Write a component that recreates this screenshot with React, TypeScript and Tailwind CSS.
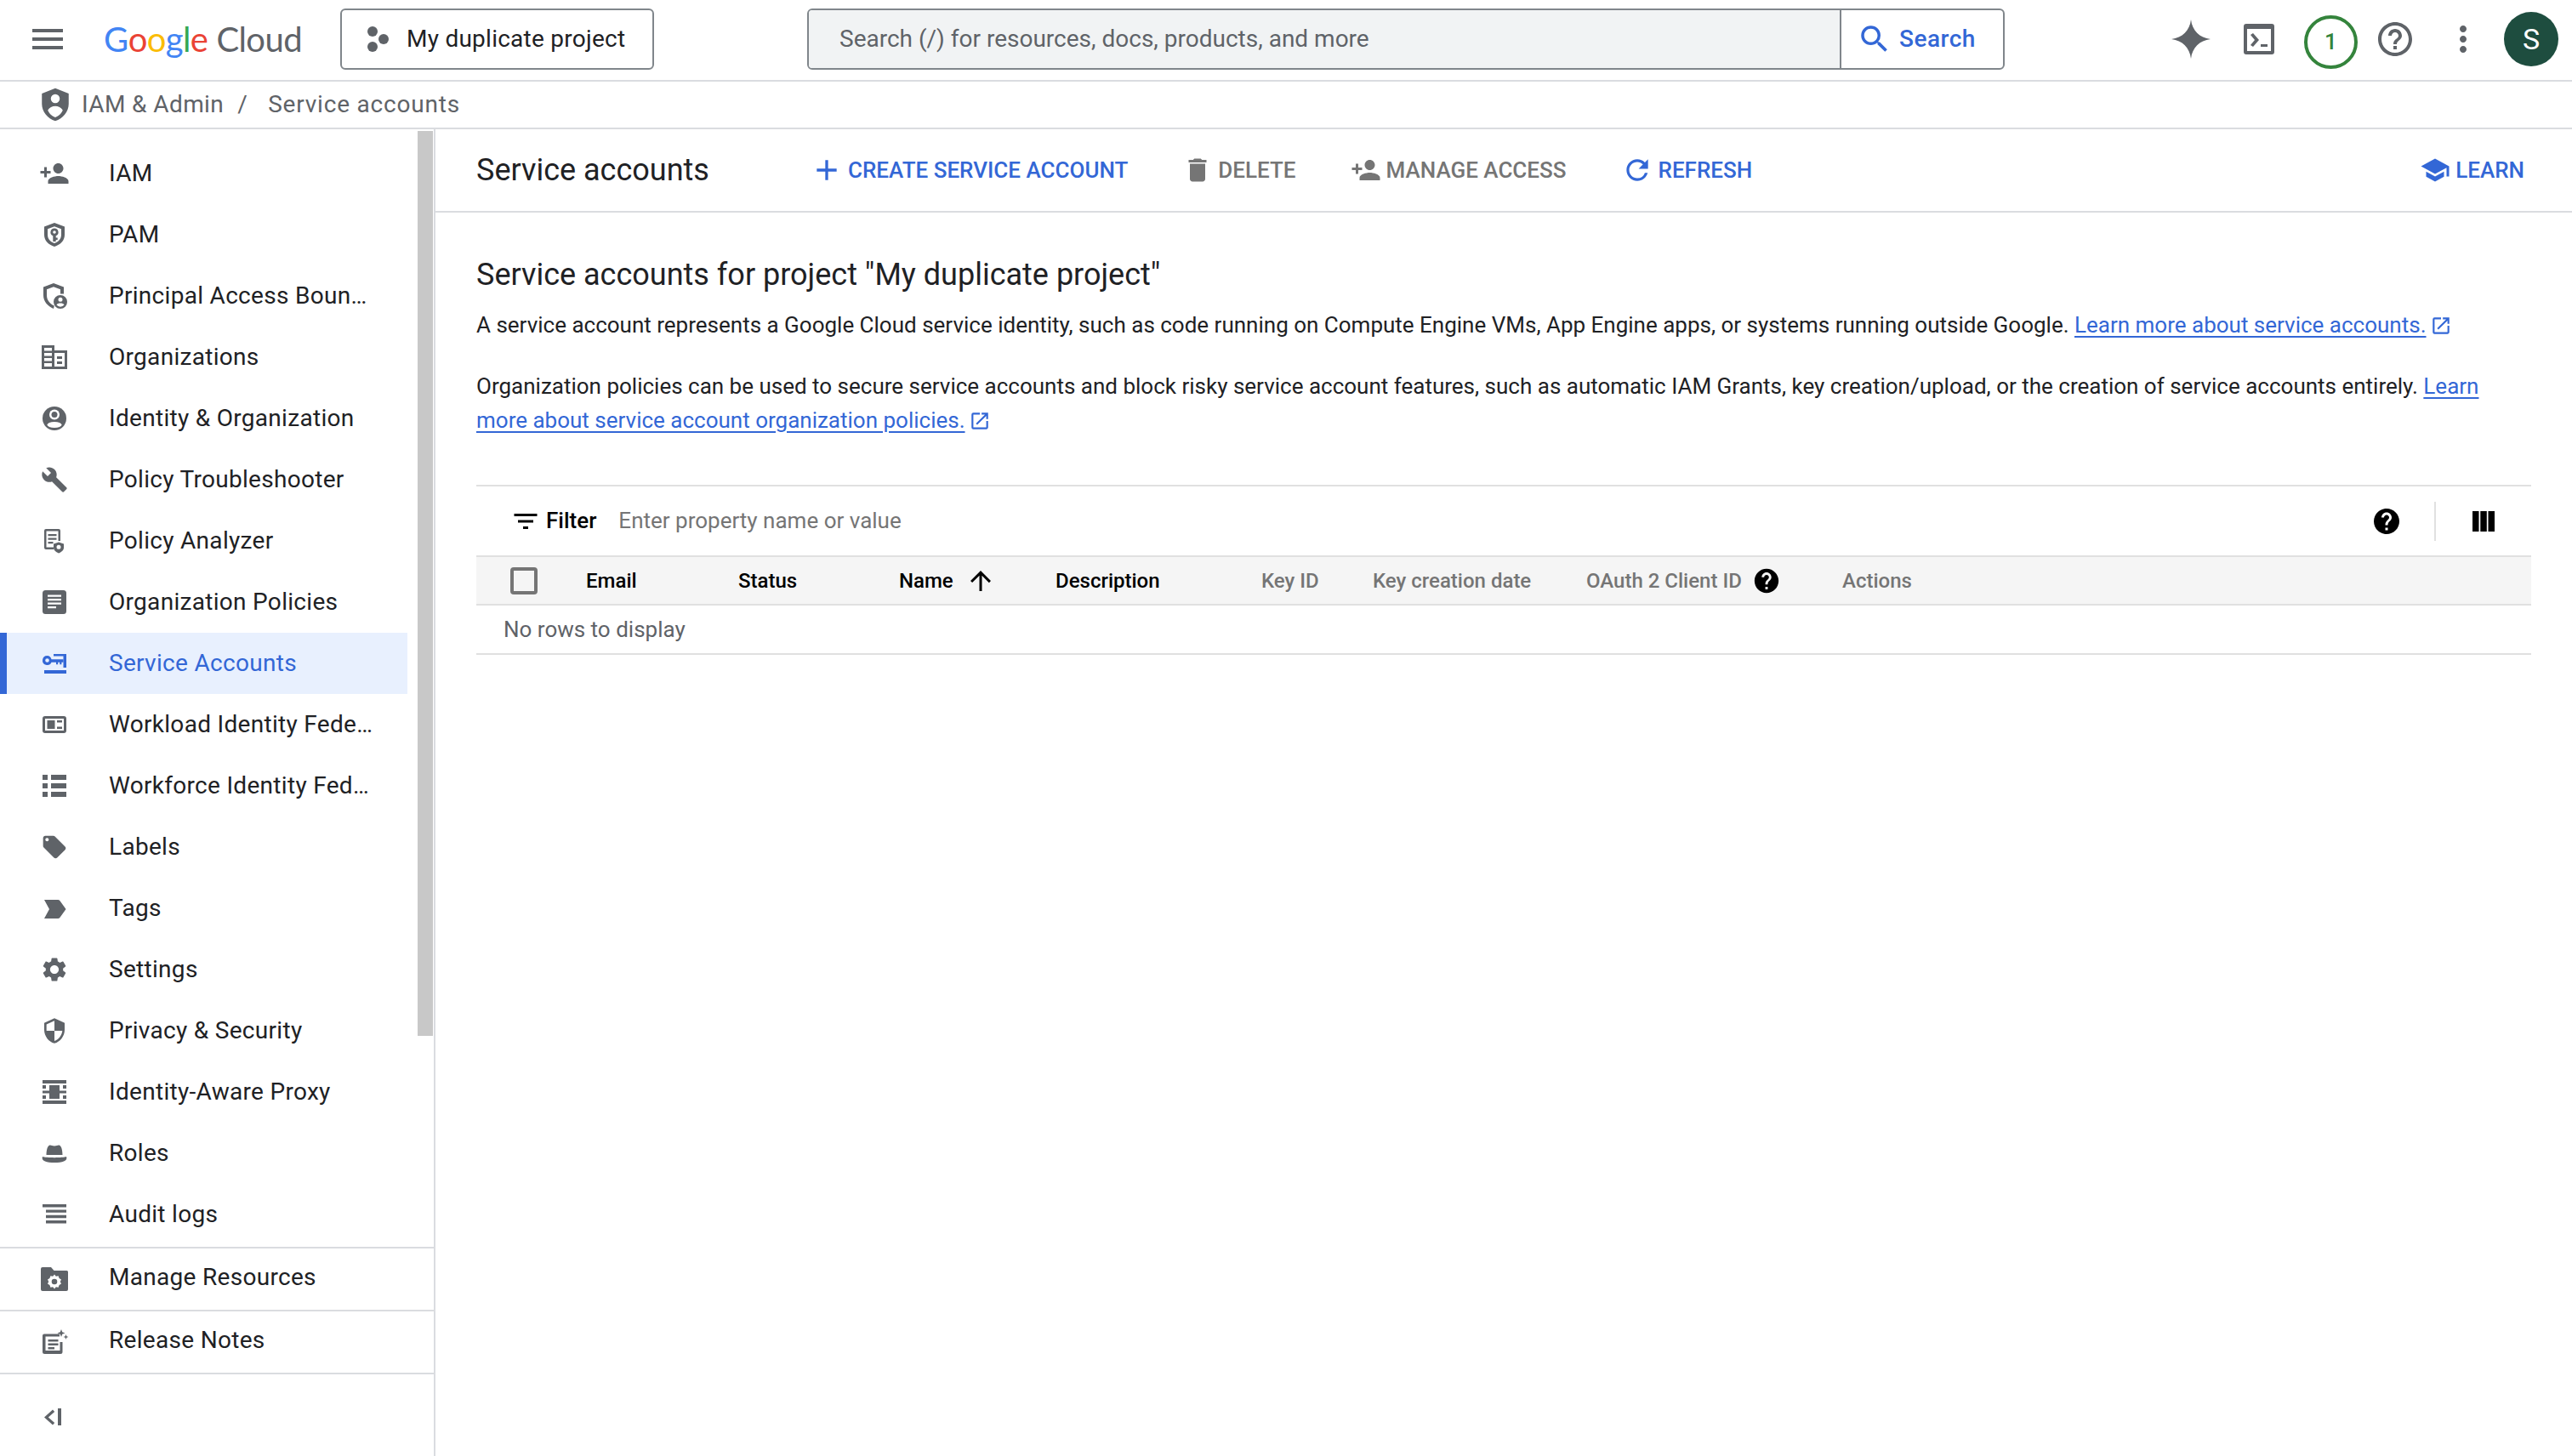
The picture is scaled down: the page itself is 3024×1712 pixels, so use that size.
import type { FC, ReactNode } from "react";
import { MdAdd, MdArrowUpward, MdBuild, MdDelete, MdFilterList, MdHelp, MdHelpOutline, MdLocalOffer, MdMenu, MdMoreVert, MdOpenInNew, MdPersonAdd, MdRefresh, MdSchool, MdSearch, MdSecurity, MdSettings } from "react-icons/md";

const boxClass = "h-[36px] w-[36px]";

const PamIcon: FC = () => (
    <svg className={boxClass} fill="#5f6368" viewBox="0 0 36 36">
        <path clipRule="evenodd" d="M18 4 6 8.500v9.500c0 7 5 11.800 12 14 7-2.200 12-7 12-14V8.500L18 4Zm0 4.200 8 3v6.800c0 5-3.400 8.500-8 10-4.600-1.500-8-5-8-10v-6.800l8-3Z" fillRule="evenodd" />
        <path clipRule="evenodd" d="M18 10.500a4.500 4.500 0 0 0-1.700 8.700V26h3.400v-2h2v-2.500h-2v-2.300A4.500 4.500 0 0 0 18 10.500Zm0 2.700a1.800 1.800 0 1 1 0 3.600 1.800 1.800 0 0 1 0-3.600Z" fillRule="evenodd" />
    </svg>
);

const PrincipalIcon: FC = () => (
    <svg className={boxClass} fill="#5f6368" viewBox="0 0 36 36">
        <path d="M17 3 5 7.500v9.500c0 7.500 5 13 12 16l.8-3.600C12 27 9 22.500 9 17v-6.800l8-3 8 3v5.300h4V7.500L17 3Z" />
        <path clipRule="evenodd" d="M25 17a8 8 0 1 0 0 16 8 8 0 0 0 0-16Zm0 2.800a2.500 2.500 0 1 1 0 5 2.500 2.500 0 0 1 0-5Zm-4.500 8.700c.7-1.400 2.500-2 4.500-2s3.800.6 4.500 2a5.800 5.800 0 0 1-9 0Z" fillRule="evenodd" />
    </svg>
);

const OrgsIcon: FC = () => (
    <svg className={boxClass} fill="#5f6368" viewBox="0 0 36 36">
        <path clipRule="evenodd" d="M3 4h15v6h15v22H3V4Zm3 3v3.500h9V7H6Zm0 6v3.500h9V13H6Zm0 6v3.500h9V19H6Zm0 6v4h9v-4H6Zm12-12v16h12V13H18Z" fillRule="evenodd" />
        <path d="M21 17h6v3h-6zM21 23h6v3h-6z" />
    </svg>
);

const IdentityIcon: FC = () => (
    <svg className={boxClass} viewBox="0 0 36 36">
        <circle cx="18" cy="18" fill="#5f6368" r="14" />
        <circle cx="18" cy="13.500" fill="#fff" r="6" />
        <circle cx="18" cy="13.500" fill="#5f6368" r="3.500" />
        <ellipse cx="18" cy="25.500" fill="#fff" rx="8.500" ry="3.500" />
    </svg>
);

const AnalyzerIcon: FC = () => (
    <svg className={boxClass} viewBox="0 0 36 36">
        <path clipRule="evenodd" d="M8 4h15a2 2 0 0 1 2 2v12h-2.500V6.500h-14v19h8.500V28H8a2 2 0 0 1-2-2V6a2 2 0 0 1 2-2Z" fill="#5f6368" fillRule="evenodd" />
        <path d="M10.500 10h10v2.200h-10zM10.500 14.500h10v2.200h-10zM10.500 19h6v2.200h-6z" fill="#5f6368" />
        <path clipRule="evenodd" d="M23 19.500 17 21.500v4.500c0 3 2.500 5 6 6.500 3.500-1.500 6-3.500 6-6.500v-4.500l-6-2Zm0 3.300a2.500 2.500 0 1 1 0 5 2.500 2.500 0 0 1 0-5Z" fill="#5f6368" fillRule="evenodd" />
    </svg>
);

const ArticleIcon: FC = () => (
    <svg className={boxClass} viewBox="0 0 36 36">
        <rect fill="#5f6368" height="28" rx="3.500" width="28" x="4" y="4" />
        <path d="M10 9.500h16v2.200H10zM10 14h16v2.200H10zM10 18.500h16v2.200H10zM10 23h10v2.200H10z" fill="#fff" />
    </svg>
);

const KeyIcon: FC = () => (
    <svg className={boxClass} fill="#3367d6" viewBox="0 0 36 36">
        <path clipRule="evenodd" d="M9.500 9a5.500 5.500 0 1 0 5 7.800h5.500v2.400h2.200v-2.400h2v2.400h2.200v-2.400h2.100v-3.600H14.500A5.500 5.500 0 0 0 9.500 9Zm0 3.200a2.300 2.300 0 1 1 0 4.600 2.300 2.300 0 0 1 0-4.600Z" fillRule="evenodd" />
        <path d="M17 7h15v16h-3.500V9.500H17zM6 26h26v4H6z" />
    </svg>
);

const WorkloadIcon: FC = () => (
    <svg className={boxClass} viewBox="0 0 36 36">
        <rect fill="#5f6368" height="20" rx="3" width="28" x="4" y="8" />
        <rect fill="#fff" height="14" width="22" x="7" y="11" />
        <path d="M9.500 13h9v10h-9zM21 13h6v2.500h-6zM21 20.500h6V23h-6z" fill="#5f6368" />
    </svg>
);

const ListIcon: FC = () => (
    <svg className={boxClass} fill="#5f6368" viewBox="0 0 36 36">
        <path d="M4 5h6v6H4zM14 5h18v6H14zM4 15h6v6H4zM14 15h18v6H14zM4 25h6v6H4zM14 25h18v6H14z" />
    </svg>
);

const TagIcon: FC = () => (
    <svg className={boxClass} fill="#5f6368" viewBox="0 0 36 36">
        <path d="M6 30 12 19 6 8h16a3 3 0 0 1 2.500 1.300L31.500 19l-7 9.700A3 3 0 0 1 22 30H6Z" />
    </svg>
);

const ProxyIcon: FC = () => (
    <svg className={boxClass} fill="#5f6368" viewBox="0 0 36 36">
        <path d="M4 4h28v4H4zM4 28h28v4H4zM12 10h12v16H12zM4 10h4v4H4zM28 10h4v4h-4zM4 22h4v4H4zM28 22h4v4h-4zM4 16.500h28v3H4z" />
    </svg>
);

const HatIcon: FC = () => (
    <svg className={boxClass} fill="#5f6368" viewBox="0 0 36 36">
        <path d="M8.500 20c0-5 1.200-10.500 3.500-11.300 2-.6 3 .8 6 .8s4-1.400 6-.8c2.300.8 3.500 6.300 3.500 11.300h-19Z" />
        <path d="M4 22c4 1.500 24 1.500 28 0 1 2 0 4.500-3 5.500-5 2-17 2-22 0-3-1-4-3.500-3-5.500Z" />
    </svg>
);

const AuditIcon: FC = () => (
    <svg className={boxClass} fill="#5f6368" viewBox="0 0 36 36">
        <path d="M4 6h28v3.400H4zM8 12.400h24v3.400H8zM8 18.800h24v3.400H8zM8 25h24v3.400H8z" />
    </svg>
);

const FolderGearIcon: FC = () => (
    <svg className={boxClass} fill="#5f6368" viewBox="0 0 36 36">
        <path clipRule="evenodd" d="M4 4h10l3.500 4h15A1.500 1.500 0 0 1 34 9.500V30a2 2 0 0 1-2 2H4a2 2 0 0 1-2-2V6a2 2 0 0 1 2-2Zm14 8.500-1.800 2.200-2.800-.4-1 2.600-2.400 1.500 1.200 2.600-1.200 2.600 2.400 1.500 1 2.600 2.800-.4 1.800 2.200 1.800-2.200 2.800.4 1-2.600 2.400-1.500-1.200-2.600 1.200-2.600-2.400-1.500-1-2.600-2.800.4-1.800-2.200Zm0 5.200a3.300 3.300 0 1 1 0 6.600 3.300 3.300 0 0 1 0-6.600Z" fillRule="evenodd" />
    </svg>
);

const ReleaseIcon: FC = () => (
    <svg className={boxClass} fill="#5f6368" viewBox="0 0 36 36">
        <path d="M6 8.500h18v3H7.500V28h17V18h3v11.500A2.500 2.500 0 0 1 25 32H6.500A2.500 2.500 0 0 1 4 29.500V10.500a2 2 0 0 1 2-2Z" />
        <path d="M10.500 15h12v2.500h-12zM10.500 19.500h12V22h-12zM10.500 24h7.500v2.500h-7.500z" />
        <path d="m26 3 1.200 3.300 3.300 1.200-3.300 1.200L26 12l-1.200-3.300-3.300-1.200 3.300-1.200zM31.500 9l.8 2.200 2.200.8-2.200.8-.8 2.200-.8-2.200-2.200-.8 2.200-.8z" />
    </svg>
);

const CollapseIcon: FC = () => (
    <svg className="h-[28px] w-[28px]" fill="#5f6368" viewBox="0 0 28 28">
        <path d="M16 5.500 6 14.500l10 9 2.200-2.400-7.400-6.600 7.400-6.600zM22 4h4v20h-4z" />
    </svg>
);

const AdminShieldIcon: FC = () => (
    <svg className="h-[42px] w-[42px]" fill="#5f6368" viewBox="0 0 24 24">
        <path clipRule="evenodd" d="M12 1 3 4.500v7c0 5.200 3.800 9.800 9 11.500 5.200-1.700 9-6.300 9-11.500v-7L12 1Zm0 4a3 3 0 1 1 0 6 3 3 0 0 1 0-6Zm0 15.500c-2.400-.9-4.400-2.800-5-4.800 1-1.700 3-2.700 5-2.700s4 1 5 2.700c-.6 2-2.600 3.900-5 4.800Z" fillRule="evenodd" />
    </svg>
);

const ProjectIcon: FC = () => (
    <svg className="h-[36px] w-[30px]" fill="#5f6368" viewBox="0 0 30 36">
        <circle cx="8" cy="9" r="6" />
        <circle cx="8" cy="27" r="6" />
        <circle cx="21" cy="18" r="6" />
    </svg>
);

const SparkIcon: FC = () => (
    <svg className="h-[46px] w-[46px]" fill="#5f6368" viewBox="0 0 46 46">
        <path d="M23 0c1.500 13 10 21.500 23 23-13 1.500-21.500 10-23 23-1.500-13-10-21.500-23-23 13-1.500 21.500-10 23-23Z" />
    </svg>
);

const TerminalIcon: FC = () => (
    <svg className="h-[36px] w-[36px]" fill="#5f6368" viewBox="0 0 36 36">
        <path clipRule="evenodd" d="M3 0h30a3 3 0 0 1 3 3v30a3 3 0 0 1-3 3H3a3 3 0 0 1-3-3V3a3 3 0 0 1 3-3Zm1 6v26h28V6H4Z" fillRule="evenodd" />
        <path d="m8 13 3-2 7 8-7 8-3-2 5-6zM20 24h8v3h-8z" />
    </svg>
);

const ColumnsIcon: FC = () => (
    <svg className="h-[28px] w-[28px]" fill="#000" viewBox="0 0 28 28">
        <path d="M1 2h7.500v24H1zM10.300 2h7.500v24h-7.500zM19.500 2H27v24h-7.500z" />
    </svg>
);

type NavItem = { icon: ReactNode; label: string; active?: boolean };

const smallIconClass = "h-[32px] w-[32px] text-[#5f6368]";

const navItems: NavItem[] = [
    { icon: <MdPersonAdd className="h-[36px] w-[36px] text-[#5f6368]" />, label: "IAM" },
    { icon: <PamIcon />, label: "PAM" },
    { icon: <PrincipalIcon />, label: "Principal Access Boun…" },
    { icon: <OrgsIcon />, label: "Organizations" },
    { icon: <IdentityIcon />, label: "Identity & Organization" },
    { icon: <MdBuild className={smallIconClass} />, label: "Policy Troubleshooter" },
    { icon: <AnalyzerIcon />, label: "Policy Analyzer" },
    { icon: <ArticleIcon />, label: "Organization Policies" },
    { active: true, icon: <KeyIcon />, label: "Service Accounts" },
    { icon: <WorkloadIcon />, label: "Workload Identity Fede…" },
    { icon: <ListIcon />, label: "Workforce Identity Fed…" },
    { icon: <MdLocalOffer className={smallIconClass} />, label: "Labels" },
    { icon: <TagIcon />, label: "Tags" },
    { icon: <MdSettings className="h-[34px] w-[34px] text-[#5f6368]" />, label: "Settings" },
    { icon: <MdSecurity className={smallIconClass} />, label: "Privacy & Security" },
    { icon: <ProxyIcon />, label: "Identity-Aware Proxy" },
    { icon: <HatIcon />, label: "Roles" },
    { icon: <AuditIcon />, label: "Audit logs" },
];

const NavRow: FC<{ item: NavItem }> = ({ item }) => (
    <div className={item.active ? "flex h-[72px] items-center border-l-[8px] border-[#3367d6] bg-[#e8f0fe] text-[#3367d6]" : "flex h-[72px] items-center border-l-[8px] border-transparent text-[#202124]"}>
        <div className="flex w-[120px] shrink-0 pl-[38px]">
            <div className="flex h-[36px] w-[36px] items-center justify-center">{item.icon}</div>
        </div>
        <span className="text-[28px] tracking-[0.3px]">{item.label}</span>
    </div>
);

const FooterRow: FC<{ icon: ReactNode; label: string }> = ({ icon, label }) => (
    <div className="flex h-[74px] items-center border-t-2 border-[#dadce0] text-[#202124]">
        <div className="flex w-[128px] shrink-0 pl-[46px]">{icon}</div>
        <span className="pb-[4px] text-[28px] tracking-[0.3px]">{label}</span>
    </div>
);

const Action: FC<{ icon: ReactNode; label: string; muted?: boolean; className?: string }> = ({ icon, label, muted, className }) => (
    <div className={`flex items-center text-[26px] font-medium ${muted ? "text-[#757575]" : "text-[#3367d6]"} ${className ?? ""}`}>
        {icon}
        <span>{label}</span>
    </div>
);

const HeadCell: FC<{ label: string; width: string; muted?: boolean; children?: ReactNode }> = ({ label, width, muted, children }) => (
    <div className={`flex items-center ${width} ${muted ? "text-[#757575]" : "text-black"}`}>
        <span>{label}</span>
        {children}
    </div>
);

const ExternalLink: FC = () => <MdOpenInNew className="ml-[4px] inline h-[26px] w-[26px] align-[-5px] text-[#3367d6]" />;

const App: FC = () => (
    <div className="flex h-[1712px] w-[3024px] flex-col overflow-hidden bg-white font-['Roboto',sans-serif] text-[#202124]">
        <header className="flex h-[96px] shrink-0 items-center border-b-2 border-[#dadce0] pb-[2px]">
            <MdMenu className="ml-[32px] h-[48px] w-[48px] text-[#5f6368]" />
            <div className="ml-[42px] flex w-[240px] items-baseline font-['Lato',sans-serif] text-[40px] tracking-[-0.6px]">
                <span className="text-[#4285f4]">G</span>
                <span className="text-[#ea4335]">o</span>
                <span className="text-[#fbbc04]">o</span>
                <span className="text-[#4285f4]">g</span>
                <span className="text-[#34a853]">l</span>
                <span className="text-[#ea4335]">e</span>
                <span className="ml-[10px] text-[#5f6368]">Cloud</span>
            </div>
            <div className="ml-[38px] flex h-[72px] w-[369px] items-center rounded-[6px] border-2 border-[#80868b] pl-[28px]">
                <ProjectIcon />
                <span className="ml-[18px] text-[28px] tracking-[0.25px]">My duplicate project</span>
            </div>
            <div className="ml-[180px] flex h-[72px] w-[1408px] rounded-[6px] border-2 border-[#80868b]">
                <div className="flex w-[1214px] items-center rounded-l-[4px] border-r-2 border-[#80868b] bg-[#f1f3f4] pl-[36px] text-[28px] text-[#5f6368]">
                    Search (/) for resources, docs, products, and more
                </div>
                <div className="flex flex-1 items-center pl-[18px] text-[28px] font-medium tracking-[0.5px] text-[#3367d6]">
                    <MdSearch className="h-[42px] w-[42px]" />
                    <span className="ml-[8px]">Search</span>
                </div>
            </div>
            <div className="ml-[196px]">
                <SparkIcon />
            </div>
            <div className="ml-[39px]">
                <TerminalIcon />
            </div>
            <div className="ml-[35px] mt-[7px] flex h-[63px] w-[63px] items-center justify-center rounded-full border-[4px] border-[#34843c] text-[26px] font-medium text-[#34843c]">1</div>
            <MdHelpOutline className="ml-[20px] h-[48px] w-[48px] text-[#5f6368]" />
            <MdMoreVert className="ml-[32px] h-[48px] w-[48px] text-[#5f6368]" />
            <div className="ml-[24px] flex h-[64px] w-[64px] items-center justify-center rounded-full bg-[#1e4d3f] text-[34px] text-white">S</div>
        </header>

        <div className="flex h-[56px] shrink-0 items-center border-b-2 border-[#dadce0] pl-[44px] text-[28px] tracking-[0.4px] text-[#5f6368]">
            <AdminShieldIcon />
            <span className="ml-[10px]">IAM &amp; Admin</span>
            <span className="ml-[16px]">/</span>
            <span className="ml-[24px] tracking-[0.8px]">Service accounts</span>
        </div>

        <div className="flex min-h-0 flex-1">
            <aside className="flex w-[512px] shrink-0 flex-col border-r-2 border-[#dadce0]">
                <div className="flex h-[1314px] shrink-0">
                    <nav className="w-[479px] shrink-0 pt-[16px]">
                        {navItems.map((item) => (
                            <NavRow item={item} key={item.label} />
                        ))}
                    </nav>
                    <div className="ml-[12px] mt-[2px] h-[1064px] w-[18px] bg-[#c8c8c8]" />
                </div>
                <FooterRow icon={<FolderGearIcon />} label="Manage Resources" />
                <FooterRow icon={<ReleaseIcon />} label="Release Notes" />
                <div className="flex flex-1 items-start border-t-2 border-[#dadce0] pl-[46px] pt-[36px]">
                    <CollapseIcon />
                </div>
            </aside>

            <main className="min-w-0 flex-1">
                <div className="flex h-[98px] items-center border-b-2 border-[#dadce0] pl-[48px] pr-[56px]">
                    <h1 className="w-[392px] text-[36px]">Service accounts</h1>
                    <Action className="gap-[5px]" icon={<MdAdd className="h-[40px] w-[40px]" />} label="CREATE SERVICE ACCOUNT" />
                    <Action className="ml-[64px] gap-[6px]" icon={<MdDelete className="h-[36px] w-[36px]" />} label="DELETE" muted />
                    <Action className="ml-[64px] gap-[6px]" icon={<MdPersonAdd className="h-[36px] w-[36px]" />} label="MANAGE ACCESS" muted />
                    <Action className="ml-[64px] gap-[6px]" icon={<MdRefresh className="h-[38px] w-[38px]" />} label="REFRESH" />
                    <Action className="ml-auto gap-[6px]" icon={<MdSchool className="h-[36px] w-[36px]" />} label="LEARN" />
                </div>

                <div className="pl-[48px] pr-[48px] pt-[50px]">
                    <h2 className="text-[36px] leading-[46px]">Service accounts for project "My duplicate project"</h2>
                    <p className="mt-[16px] text-[26px] leading-[40px]">
                        A service account represents a Google Cloud service identity, such as code running on Compute Engine VMs, App Engine apps, or systems running outside Google.{" "}
                        <span className="text-[#3367d6] underline underline-offset-4">Learn more about service accounts.</span>
                        <ExternalLink />
                    </p>
                    <p className="mt-[32px] text-[26px] leading-[40px]">
                        Organization policies can be used to secure service accounts and block risky service account features, such as automatic IAM Grants, key creation/upload, or the creation of service accounts entirely.{" "}
                        <span className="text-[#3367d6] underline underline-offset-4">Learn more about service account organization policies.</span>
                        <ExternalLink />
                    </p>

                    <div className="mt-[56px] border-t-2 border-[#e0e0e0] text-[24px]">
                        <div className="flex h-[81px] items-center pl-[40px] pr-[42px] text-[26px]">
                            <MdFilterList className="h-[36px] w-[36px] text-black" />
                            <span className="ml-[6px] font-medium text-black">Filter</span>
                            <span className="ml-[26px] text-[#757575]">Enter property name or value</span>
                            <MdHelp className="ml-auto h-[36px] w-[36px] text-black" />
                            <div className="ml-[38px] h-[46px] w-[2px] bg-[#e0e0e0]" />
                            <div className="ml-[42px]">
                                <ColumnsIcon />
                            </div>
                        </div>
                        <div className="flex h-[59px] items-center border-y-2 border-[#e0e0e0] bg-[#f5f5f5] font-medium">
                            <div className="ml-[40px] h-[32px] w-[32px] rounded-[4px] border-[4px] border-[#757575]" />
                            <div className="ml-[57px] flex">
                                <HeadCell label="Email" width="w-[179px]" />
                                <HeadCell label="Status" width="w-[189px]" />
                                <HeadCell label="Name" width="w-[184px]">
                                    <MdArrowUpward className="ml-[14px] h-[36px] w-[36px]" />
                                </HeadCell>
                                <HeadCell label="Description" width="w-[242px]" />
                                <HeadCell label="Key ID" muted width="w-[131px]" />
                                <HeadCell label="Key creation date" muted width="w-[251px]" />
                                <HeadCell label="OAuth 2 Client ID" muted width="w-[301px]">
                                    <MdHelp className="ml-[12px] h-[34px] w-[34px] text-black" />
                                </HeadCell>
                                <HeadCell label="Actions" muted width="w-[120px]" />
                            </div>
                        </div>
                        <div className="flex h-[58px] items-center border-b-2 border-[#e0e0e0] pl-[32px] text-[26px] text-[#5f6368]">No rows to display</div>
                    </div>
                </div>
            </main>
        </div>
    </div>
);

export default App;
